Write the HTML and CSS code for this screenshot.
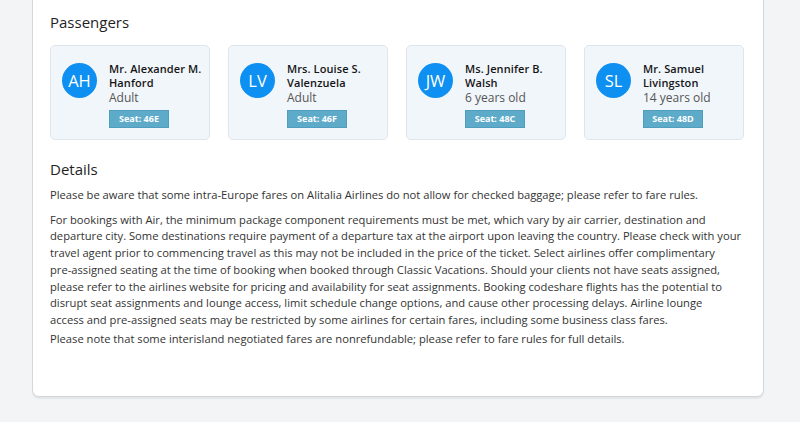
FILE: index.html
```html
<!DOCTYPE html>
<html lang="en">
<head>
<meta charset="utf-8">
<title>Booking details</title>
<link rel="stylesheet" href="styles.css">
</head>
<body>
<main class="panel">
  <section class="section">
    <h2 class="section-title">Passengers</h2>
    <div class="passengers">
      <div class="passenger">
        <div class="avatar">AH</div>
        <div class="info">
          <div class="name">Mr. Alexander M. Hanford</div>
          <div class="type">Adult</div>
          <span class="seat">Seat: 46E</span>
        </div>
      </div>
      <div class="passenger">
        <div class="avatar">LV</div>
        <div class="info">
          <div class="name">Mrs. Louise S. Valenzuela</div>
          <div class="type">Adult</div>
          <span class="seat">Seat: 46F</span>
        </div>
      </div>
      <div class="passenger">
        <div class="avatar">JW</div>
        <div class="info">
          <div class="name">Ms. Jennifer B. Walsh</div>
          <div class="type">6 years old</div>
          <span class="seat">Seat: 48C</span>
        </div>
      </div>
      <div class="passenger">
        <div class="avatar">SL</div>
        <div class="info">
          <div class="name">Mr. Samuel Livingston</div>
          <div class="type">14 years old</div>
          <span class="seat">Seat: 48D</span>
        </div>
      </div>
    </div>
  </section>
  <section class="section details">
    <h2 class="section-title">Details</h2>
    <p>Please be aware that some intra-Europe fares on Alitalia Airlines do not allow for checked baggage; please refer to fare rules.</p>
    <p class="terms">For bookings with Air, the minimum package component requirements must be met, which vary by air carrier, destination and departure city. Some destinations require payment of a departure tax at the airport upon leaving the country. Please check with your travel agent prior to commencing travel as this may not be included in the price of the ticket. Select airlines offer complimentary <span class="nobr">pre-assigned</span> seating at the time of booking when booked through Classic Vacations. Should your clients not have seats assigned, please refer to the airlines website for pricing and availability for seat assignments. Booking codeshare flights has the potential to disrupt seat assignments and lounge access, limit schedule change options, and cause other processing delays. Airline lounge <span class="nobr">access and pre-assigned</span> seats may be restricted by some airlines for certain fares, including some business class fares.</p>
    <p class="note">Please note that some interisland negotiated fares are nonrefundable; please refer to fare rules for full details.</p>
  </section>
</main>
</body>
</html>
```
FILE: styles.css
```css
html, body {
  margin: 0;
  padding: 0;
}

body {
  background: #f3f4f6;
  font-family: "Open Sans", "Noto Sans", sans-serif;
  color: #333;
  height: 422px;
  overflow: hidden;
}

.panel {
  margin: -20px 36px 0 32px;
  padding: 31px 17px 49px 17px;
  background: #fff;
  border: 1px solid #d3d6db;
  border-radius: 0 0 7px 7px;
  box-shadow: 0 2px 1px rgba(0, 0, 0, 0.06);
}

.section-title {
  margin: 0;
  font-size: 15px;
  font-weight: 500;
  color: #1f1f1f;
  line-height: 20px;
}

.passengers {
  display: grid;
  grid-template-columns: repeat(4, 160px);
  column-gap: 18px;
  margin-top: 13px;
}

.passenger {
  display: flex;
  align-items: flex-start;
  gap: 12px;
  height: 95px;
  box-sizing: border-box;
  padding: 16px 4px 0 11px;
  background: #f1f6fb;
  border: 1px solid #dfe5ec;
  border-radius: 5px;
}

.avatar {
  flex: none;
  width: 35px;
  height: 35px;
  margin-top: 1px;
  border-radius: 50%;
  background: #0d90f1;
  color: #fff;
  font-size: 16.5px;
  line-height: 35px;
  text-align: center;
}

.info {
  display: flex;
  flex-direction: column;
  align-items: flex-start;
}

.name {
  font-size: 11px;
  font-weight: 600;
  color: #151515;
  line-height: 14px;
  letter-spacing: 0.1px;
}

.type {
  font-size: 12px;
  color: #555;
  line-height: 15px;
}

.seat {
  margin-top: 5px;
  width: 60px;
  height: 18px;
  box-sizing: border-box;
  background: #5eaac9;
  border: 1px solid #4f9dbf;
  color: #fff;
  font-size: 9px;
  font-weight: 700;
  line-height: 16px;
  text-align: center;
}

.details {
  margin-top: 19px;
}

.details p {
  margin: 8px 0 0;
  font-size: 11.2px;
  line-height: 16.7px;
  color: #333;
}

.details .terms {
  margin-top: 8px;
}

.details .note {
  margin-top: 2px;
}

.nobr {
  white-space: nowrap;
}
```
